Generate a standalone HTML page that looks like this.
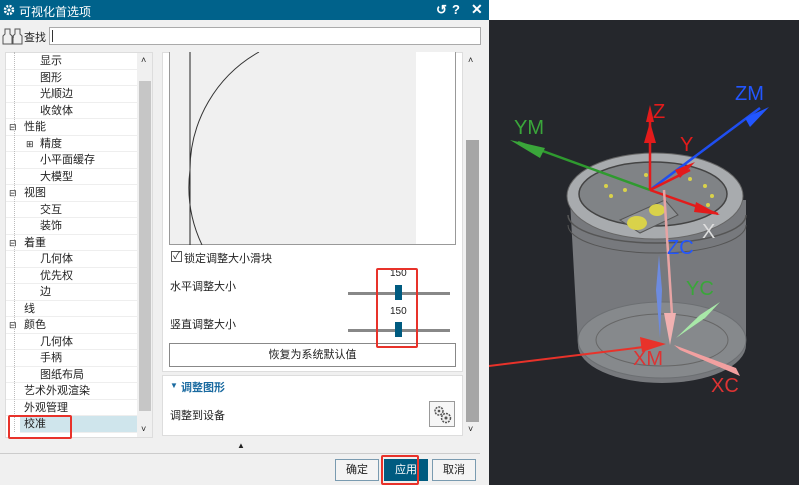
<!DOCTYPE html>
<html><head><meta charset="utf-8"><style>
*{margin:0;padding:0;box-sizing:border-box}
body{width:799px;height:485px;overflow:hidden;position:relative;background:#fff;font-family:"Liberation Sans","Noto Sans CJK SC",sans-serif;font-size:11px;color:#222}
.a{position:absolute}
.title{left:0;top:0;width:489px;height:20px;background:#00628b;color:#fff;font-size:12px}
.dlg{left:0;top:20px;width:489px;height:465px;background:#f0f0f0}
.vp{left:489px;top:20px;width:310px;height:465px;background:#25272c}
.row{position:absolute;left:6px;width:131px;height:16.5px;border-bottom:1px solid #eee;background:#fff;line-height:16px}
.row span{position:absolute}
.btn{position:absolute;border:1px solid #7a9bb0;background:#f4f4f4;text-align:center;line-height:20px;font-size:11px}
.red{position:absolute;border:2px solid #e8322a;border-radius:2px}
</style></head><body>
<div class="a title">
 <svg class="a" style="left:3px;top:4px" width="12" height="12" viewBox="0 0 12 12"><circle cx="6" cy="6" r="4" fill="none" stroke="#fff" stroke-width="2.5" stroke-dasharray="2 1.2"/><circle cx="6" cy="6" r="1.5" fill="#fff"/></svg>
 <span class="a" style="left:19px;top:3px">可视化首选项</span>
 <span class="a" style="left:436px;top:2px;font-size:13px;font-weight:bold">↺</span>
 <span class="a" style="left:452px;top:2px;font-size:13px;font-weight:bold">?</span>
 <span class="a" style="left:471px;top:1px;font-size:14px;font-weight:bold">✕</span>
</div>
<div class="a dlg"></div>
<svg class="a" style="left:2px;top:26px" width="22" height="19" viewBox="0 0 22 19"><g fill="none" stroke="#555" stroke-width="1"><path d="M3 3h5v5l2 2v8H1v-8l2-2z"/><path d="M13 3h5v5l2 2v8h-9v-8l2-2z"/><path d="M10 11h2"/></g></svg>
<span class="a" style="left:24px;top:29px">查找</span>
<div class="a" style="left:49px;top:27px;width:432px;height:18px;background:#fff;border:1px solid #aaa"></div>
<div class="a" style="left:52px;top:30px;width:1px;height:12px;background:#333"></div>
<div class="a" style="left:5px;top:52px;width:148px;height:386px;background:#fff;border:1px solid #ddd;overflow:hidden"></div>
<div class="a" style="left:137px;top:53px;width:15px;height:384px;background:#f0f0f0"></div>
<div class="a" style="left:139px;top:81px;width:12px;height:330px;background:#c6c6c6"></div>
<span class="a" style="left:141px;top:55px;font-size:9px">˄</span>
<span class="a" style="left:141px;top:424px;font-size:9px">˅</span>
<div class="row" style="top:53px"><span style="left:34px">显示</span></div>
<div class="row" style="top:69.5px"><span style="left:34px">图形</span></div>
<div class="row" style="top:86px"><span style="left:34px">光顺边</span></div>
<div class="row" style="top:102.5px"><span style="left:34px">收敛体</span></div>
<div class="row" style="top:119px"><span style="left:3px;font-size:9px">⊟</span><span style="left:18px">性能</span></div>
<div class="row" style="top:135.5px"><span style="left:20px;font-size:9px">⊞</span><span style="left:34px">精度</span></div>
<div class="row" style="top:152px"><span style="left:34px">小平面缓存</span></div>
<div class="row" style="top:168.5px"><span style="left:34px">大模型</span></div>
<div class="row" style="top:185px"><span style="left:3px;font-size:9px">⊟</span><span style="left:18px">视图</span></div>
<div class="row" style="top:201.5px"><span style="left:34px">交互</span></div>
<div class="row" style="top:218px"><span style="left:34px">装饰</span></div>
<div class="row" style="top:234.5px"><span style="left:3px;font-size:9px">⊟</span><span style="left:18px">着重</span></div>
<div class="row" style="top:251px"><span style="left:34px">几何体</span></div>
<div class="row" style="top:267.5px"><span style="left:34px">优先权</span></div>
<div class="row" style="top:284px"><span style="left:34px">边</span></div>
<div class="row" style="top:300.5px"><span style="left:18px">线</span></div>
<div class="row" style="top:317px"><span style="left:3px;font-size:9px">⊟</span><span style="left:18px">颜色</span></div>
<div class="row" style="top:333.5px"><span style="left:34px">几何体</span></div>
<div class="row" style="top:350px"><span style="left:34px">手柄</span></div>
<div class="row" style="top:366.5px"><span style="left:34px">图纸布局</span></div>
<div class="row" style="top:383px"><span style="left:18px">艺术外观渲染</span></div>
<div class="row" style="top:399.5px"><span style="left:18px">外观管理</span></div>
<div class="row" style="top:416px;background:#cfe5ec;left:20px;width:117px"><span style="left:4px">校准</span></div>
<div class="a" style="left:14px;top:52px;width:0;height:380px;border-left:1px dotted #bbb"></div>
<div class="a" style="left:162px;top:52px;width:301px;height:320px;background:#fff;border:1px solid #ddd"></div>
<div class="a" style="left:169px;top:52px;width:287px;height:193px;background:#fff;border:1px solid #999;border-top:none"></div>
<div class="a" style="left:170px;top:52px;width:246px;height:192px;background:#f0f0f0"></div>
<svg class="a" style="left:169px;top:52px" width="287" height="193"><line x1="21" y1="0" x2="21" y2="193" stroke="#222"/><path d="M90 0 A135 135 0 0 0 21 118 A135 135 0 0 0 33 193" fill="none" stroke="#333"/></svg>
<div class="a" style="left:171px;top:251px;width:11px;height:11px;border:1px solid #555;background:#fff;font-size:10px;line-height:9px;text-align:center">✓</div>
<span class="a" style="left:184px;top:250px">锁定调整大小滑块</span>
<span class="a" style="left:170px;top:278px">水平调整大小</span>
<span class="a" style="left:390px;top:268px;font-size:10px">150</span>
<div class="a" style="left:348px;top:292px;width:102px;height:3px;background:#888"></div>
<div class="a" style="left:395px;top:285px;width:7px;height:15px;background:#005b80"></div>
<span class="a" style="left:170px;top:316px">竖直调整大小</span>
<span class="a" style="left:390px;top:306px;font-size:10px">150</span>
<div class="a" style="left:348px;top:329px;width:102px;height:3px;background:#888"></div>
<div class="a" style="left:395px;top:322px;width:7px;height:15px;background:#005b80"></div>
<div class="btn" style="left:169px;top:343px;width:287px;height:24px;border-color:#888;background:#fff;line-height:22px">恢复为系统默认值</div>
<div class="a" style="left:162px;top:375px;width:301px;height:61px;background:#fff;border:1px solid #ddd"></div>
<span class="a" style="left:170px;top:381px;color:#1a6aa0;font-size:8px">▼</span>
<span class="a" style="left:181px;top:379px;color:#1a6aa0;font-weight:bold">调整图形</span>
<span class="a" style="left:170px;top:407px">调整到设备</span>
<div class="a" style="left:429px;top:401px;width:26px;height:26px;border:1px solid #999;background:#f6f6f6"></div>
<svg class="a" style="left:431px;top:403px" width="22" height="22" viewBox="0 0 22 22"><g fill="#eee" stroke="#555" stroke-width="1.5"><circle cx="8" cy="8" r="4" stroke-dasharray="2 1"/><circle cx="15" cy="15" r="4.5" stroke-dasharray="2 1"/></g><circle cx="8" cy="8" r="1.3" fill="#555"/><circle cx="15" cy="15" r="1.5" fill="#555"/></svg>
<div class="a" style="left:465px;top:52px;width:15px;height:385px;background:#f0f0f0"></div>
<div class="a" style="left:466px;top:140px;width:13px;height:282px;background:#a6a6a6"></div>
<span class="a" style="left:468px;top:55px;font-size:9px">˄</span>
<span class="a" style="left:468px;top:424px;font-size:9px">˅</span>
<span class="a" style="left:237px;top:441px;font-size:8px">▲</span>
<div class="a" style="left:0;top:453px;width:480px;height:1px;background:#ccc"></div>
<div class="btn" style="left:335px;top:459px;width:44px;height:22px">确定</div>
<div class="btn" style="left:384px;top:459px;width:44px;height:22px;background:#005b80;color:#fff;border-color:#005b80">应用</div>
<div class="btn" style="left:432px;top:459px;width:44px;height:22px">取消</div>
<div class="a" style="left:489px;top:0;width:310px;height:20px;background:#fff"></div>
<div class="a vp"></div>
<svg class="a" style="left:489px;top:0" width="310" height="485" viewBox="489 0 310 485" font-family="Liberation Sans,sans-serif">
<path d="M570 200 L578 345 A84 38 0 0 0 746 345 L746 200 Z" fill="#9a9da0" opacity="0.7"/>
<ellipse cx="662" cy="340" rx="84" ry="38" fill="#8a8d90" opacity="0.8" stroke="#6a6d70"/>
<ellipse cx="662" cy="340" rx="66" ry="26" fill="none" stroke="#666"/>
<path d="M568 215 A89 28 0 0 0 746 215" fill="none" stroke="#555" stroke-width="1.5"/>
<path d="M568 225 A89 28 0 0 0 746 225" fill="none" stroke="#555"/>
<ellipse cx="655" cy="196" rx="88" ry="43" fill="#a8abae" stroke="#666"/>
<ellipse cx="653" cy="194" rx="74" ry="32" fill="#808386" stroke="#444" stroke-width="1.5"/>
<g fill="#d9d24a"><circle cx="611" cy="196" r="2"/><circle cx="606" cy="186" r="2"/><circle cx="625" cy="190" r="2"/><circle cx="646" cy="175" r="2"/><circle cx="690" cy="179" r="2"/><circle cx="705" cy="186" r="2"/><circle cx="712" cy="196" r="2"/><circle cx="708" cy="205" r="2"/></g>
<path d="M620 220 L665 200 L678 215 L640 233 Z" fill="#8f9295" stroke="#555"/>
<ellipse cx="637" cy="223" rx="10" ry="7" fill="#d9d24a"/><ellipse cx="657" cy="210" rx="8" ry="6" fill="#d9d24a"/>
<line x1="518" y1="142" x2="650" y2="190" stroke="#2f9a2f" stroke-width="2.5"/><polygon points="510,140 545,148 540,158" fill="#3aa63a"/>
<line x1="650" y1="190" x2="760" y2="108" stroke="#1f4ef0" stroke-width="2.5"/><polygon points="769,107 745,118 750,127" fill="#2256ff"/>
<line x1="650" y1="190" x2="650" y2="120" stroke="#e31b1b" stroke-width="2.5"/><polygon points="646,122 654,122 650,105 " fill="#e31b1b"/><polygon points="644,143 656,143 650,122" fill="#e31b1b"/>
<line x1="650" y1="190" x2="690" y2="170" stroke="#e31b1b" stroke-width="2.5"/><polygon points="695,162 675,170 680,178" fill="#e31b1b"/>
<line x1="650" y1="190" x2="718" y2="214" stroke="#e31b1b" stroke-width="2.5"/><polygon points="720,215 696,202 694,212" fill="#e31b1b"/>
<line x1="664" y1="190" x2="672" y2="315" stroke="#e7a4a4" stroke-width="2.5"/><polygon points="664,313 676,313 670,345" fill="#f1b1b1"/>
<polygon points="659,255 662,290 660,338 656,290" fill="#6d8be0"/>
<polygon points="720,302 705,318 676,338 700,315" fill="#a8e8a8"/>
<polygon points="674,345 736,368 740,376 680,350" fill="#f2a0a0"/>
<line x1="440" y1="372" x2="660" y2="345" stroke="#e8322a" stroke-width="2"/><polygon points="666,344 640,337 642,352" fill="#e8322a"/>
<g font-size="20"><text x="514" y="134" fill="#3aa63a">YM</text><text x="735" y="100" fill="#2256ff">ZM</text><text x="653" y="118" fill="#e31b1b">Z</text><text x="680" y="151" fill="#e31b1b">Y</text><text x="702" y="238" fill="#ddd">X</text><text x="667" y="254" fill="#2256ff">ZC</text><text x="686" y="295" fill="#3aa63a">YC</text><text x="633" y="365" fill="#d33">XM</text><text x="711" y="392" fill="#d33">XC</text></g>
</svg>
<div class="red" style="left:376px;top:268px;width:42px;height:80px"></div>
<div class="red" style="left:8px;top:415px;width:64px;height:24px"></div>
<div class="red" style="left:381px;top:455px;width:38px;height:30px"></div>
</body></html>
